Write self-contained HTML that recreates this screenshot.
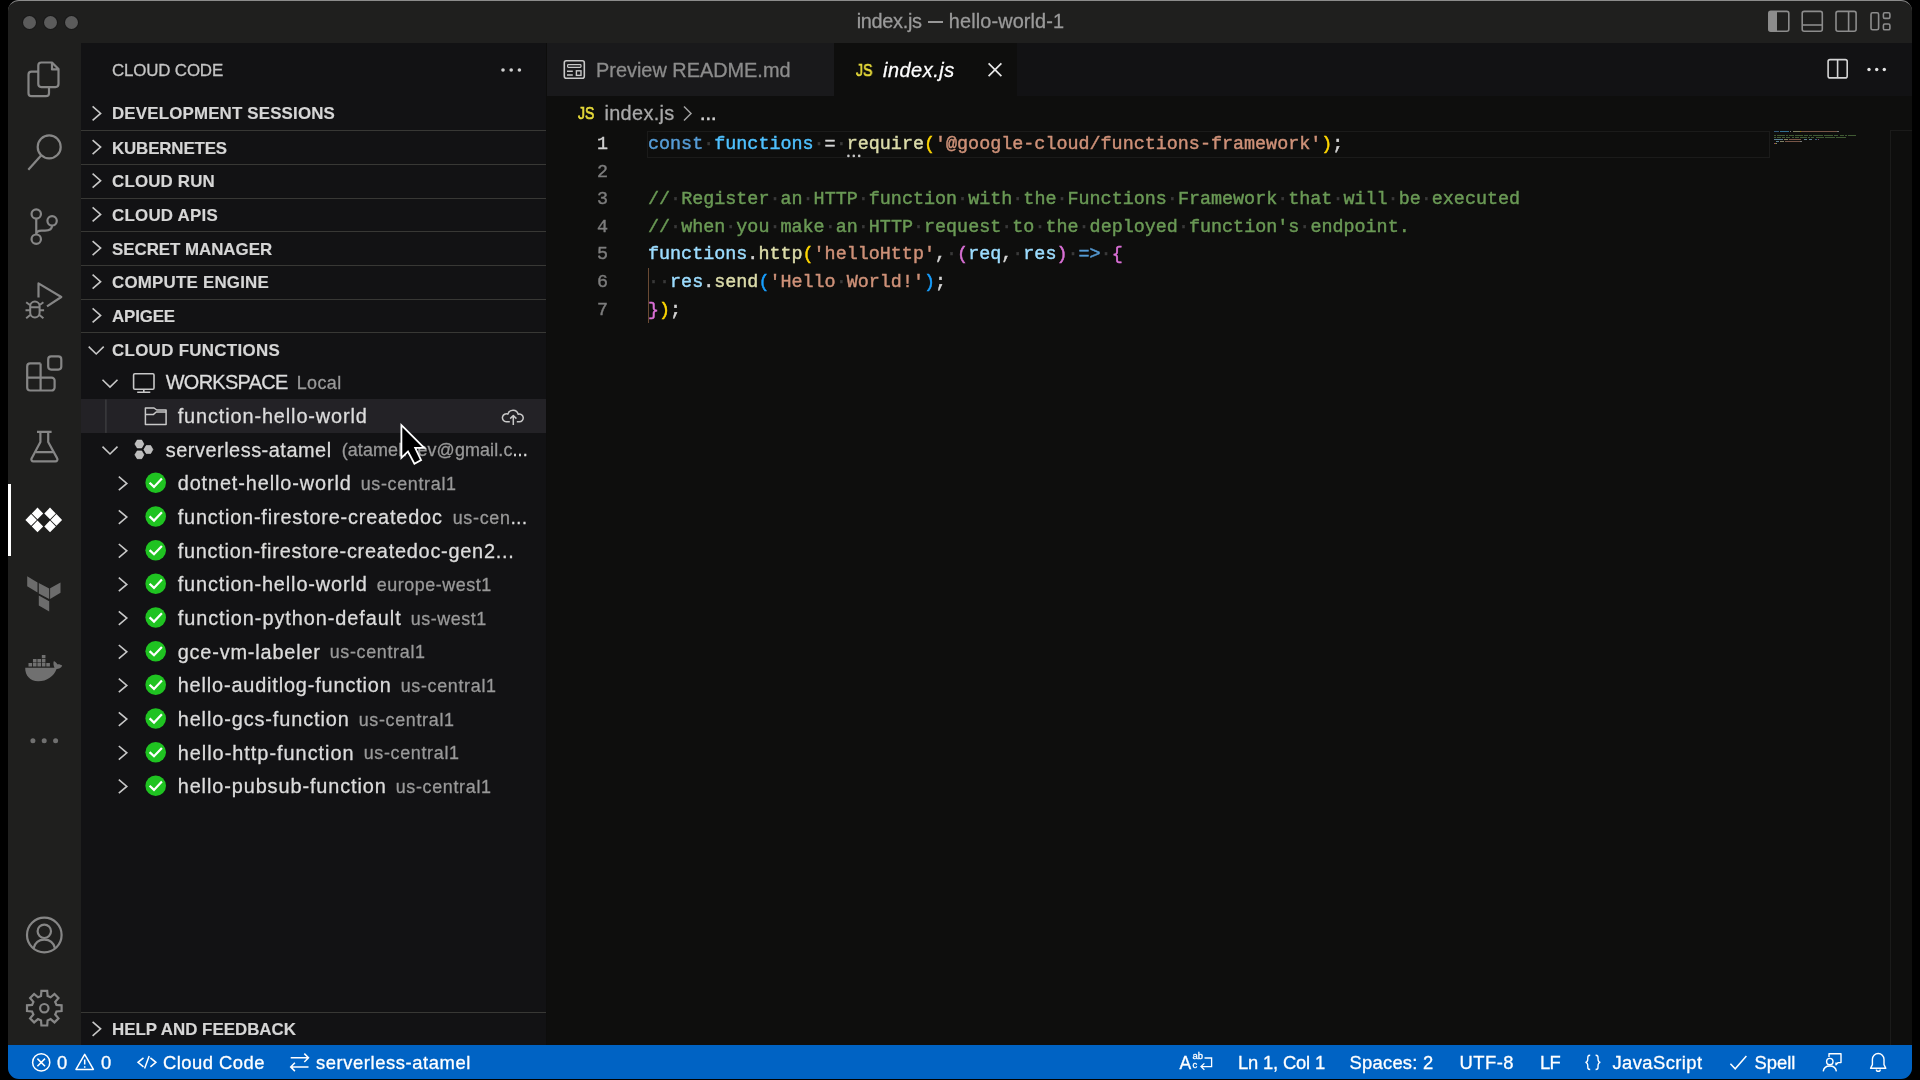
<!DOCTYPE html>
<html>
<head>
<meta charset="utf-8">
<title>index.js — hello-world-1</title>
<style>
*{box-sizing:border-box;margin:0;padding:0}
html,body{width:1920px;height:1080px;overflow:hidden;background:#000;font-family:"Liberation Sans",sans-serif;-webkit-text-stroke:0.3px currentColor;}
.abs{position:absolute}
#win{position:absolute;left:8px;top:1px;width:1904px;height:1078px;border-radius:11px;overflow:hidden;background:#0e0e0d;}
#winborder{position:absolute;left:8px;top:0;width:1904px;height:14px;border-top:1px solid #8c8c8c;border-radius:11px 11px 0 0;pointer-events:none}
/* coordinates inside #win are page coords minus (8,1); use wrapper to shift */
#page{position:absolute;left:-8px;top:-1px;width:1920px;height:1080px;will-change:transform}
#titlebar{left:8px;top:0;width:1904px;height:43px;background:#1f1f1e}
.tt{top:0;height:43px;line-height:43px;color:#9a9a9a;font-size:19.9px;white-space:nowrap}
.tl{position:absolute;top:15.5px;width:13px;height:13px;border-radius:50%;background:#5b5b5b;box-shadow:0 0 0 1px #191919}
#activity{left:8px;top:43px;width:73px;height:1002px;background:#1f1f1e}
#sidebar{left:81px;top:43px;width:465px;border-right:0;height:1002px;background:#121214}
#tabbar{left:547px;top:43px;width:1365px;height:53.2px;background:#121214}
#tab1{left:547px;top:43px;width:286.8px;height:53.2px;background:#19191b}
#tab2{left:833.8px;top:43px;width:183.5px;height:53.2px;background:#0e0e0d}
#status{left:8px;top:1045.2px;width:1904px;height:35px;background:#0063c4}
.st{position:absolute;top:1045.7px;height:34px;line-height:34px;color:#fff;font-size:18.4px;white-space:nowrap}
/* sidebar rows */
.row{position:absolute;left:81px;width:465px;height:33.667px;top:calc(96.6px + 33.667px * var(--i));line-height:33.667px;white-space:nowrap;color:#dcdcdc;font-size:19.9px}
.ph{-webkit-text-stroke:0.15px currentColor;font-weight:bold;font-size:16.9px;color:#d6d6d6;border-top:1px solid #383835}
.ph.first{border-top:none}
.row span{position:absolute;top:0.4px}
.row .d{color:#999999;font-size:17.9px;top:1px}
.row svg{position:absolute}
.code{-webkit-text-stroke:0.45px currentColor;position:absolute;left:648px;height:27.6px;line-height:27.6px;font-family:"Liberation Mono",monospace;font-size:18.4px;white-space:pre;color:#d4d4d4;top:calc(131px + 27.6px * var(--n))}
.ln{-webkit-text-stroke:0.4px currentColor;position:absolute;left:560px;width:48px;text-align:right;height:27.6px;line-height:27.6px;font-family:"Liberation Mono",monospace;font-size:18.4px;color:#7d7d7d;top:calc(131px + 27.6px * var(--n))}
.js{-webkit-text-stroke:0.65px currentColor;font-weight:normal;font-size:16.3px;line-height:18px;color:#e6da3a;transform:scaleX(0.86);transform-origin:0 0;letter-spacing:0}
.k{color:#569cd6}.c{color:#4fc1ff}.v{color:#9cdcfe}.f{color:#dcdcaa}.s{color:#ce9178}.m{color:#6a9955}.b1{color:#ffd700}.b2{color:#da70d6}.b3{color:#179fff}.w{color:#3a3a3a}
</style>
</head>
<body>
<div id="win"><div id="page">

<!-- title bar -->
<div id="titlebar" class="abs"></div>
<div class="tl" style="left:22.5px"></div><div class="tl" style="left:43.5px"></div><div class="tl" style="left:65px"></div>
<div class="abs tt" style="left:856.7px;letter-spacing:-0.3px">index.js</div>
<div class="abs" style="left:928px;top:21.2px;width:15px;height:1.7px;background:#979797"></div>
<div class="abs tt" style="left:948.8px;letter-spacing:0.12px">hello-world-1</div>

<!-- activity bar -->
<div id="activity" class="abs"></div>
<div class="abs" style="left:8px;top:484px;width:3px;height:72px;background:#fff"></div>

<!-- activity icons -->
<svg class="abs" style="left:0;top:0" width="82" height="1045" viewBox="0 0 82 1045" fill="none" stroke="#868686" stroke-width="2.2" stroke-linecap="butt" stroke-linejoin="round">
<!-- files -->
<path d="M41.3 62.5H52L58.5 69V84.1a3 3 0 0 1-3 3H41.3a3 3 0 0 1-3-3V65.5a3 3 0 0 1 3-3ZM52 62.5V69.4H58.5"/>
<path d="M38.3 71.6H31.5a3 3 0 0 0-3 3V93.2a3 3 0 0 0 3 3H46a3 3 0 0 0 3-3V87.1"/>
<!-- search -->
<circle cx="49.2" cy="146.9" r="11.5"/><path d="M41.3 155.2L28.3 169.8"/>
<!-- scm -->
<circle cx="36.25" cy="214" r="4.7"/><circle cx="52.1" cy="220.8" r="4.7"/><circle cx="36.25" cy="239.2" r="4.7"/>
<path d="M36.25 218.7V234.5M52.1 225.5C52.1 229.5 49 230.6 45 230.6H41.5C38.5 230.6 36.25 232 36.25 234.5"/>
<!-- debug -->
<path d="M38.5 297.5V283.4L61.3 297L47 306.3" stroke-linejoin="round"/>
<path d="M30.2 306.2a4.7 4.7 0 0 1 9.4 0V312.8a4.7 4.7 0 0 1-9.4 0ZM30.2 307.2H39.6M30.2 305.2L26.2 302.2M30.2 310.2H25.5M30.2 315L26.2 318.3M39.4 305.2L43.4 302.2M39.4 310.2H44.1M39.4 315L43.4 318.3" stroke-width="2"/>
<!-- extensions -->
<path d="M40.6 363.4H30.2a3 3 0 0 0-3 3V387.5a3 3 0 0 0 3 3H51.6a3 3 0 0 0 3-3V380.6a3 3 0 0 0-3-3H27.2M40.6 363.4V390.5"/>
<rect x="48.2" y="356.4" width="13.1" height="13.2" rx="3"/>
<!-- beaker -->
<path d="M37 431.8H51.6M40.4 431.8V442L31.6 458.4a2 2 0 0 0 1.8 3H55.4a2 2 0 0 0 1.8-3L48.2 442V431.8M36 452.1H52.8"/>
<!-- cloud code (active) -->
<path d="M37.5 507.6L43.2 513.4L37.5 519.3L31.8 513.4ZM50.0 507.6L55.8 513.4L50.0 519.3L44.3 513.4ZM37.5 520.5L43.2 526.4L37.5 532.2L31.8 526.4ZM50.0 520.5L55.8 526.4L50.0 532.2L44.3 526.4ZM31.1 514.0L36.9 519.9L31.1 525.8L25.4 519.9ZM56.4 514.0L62.1 519.9L56.4 525.8L50.6 519.9Z" fill="#ffffff" stroke="none"/>
<!-- terraform -->
<path d="M27.2 576.2L37.5 582.4V592.5L27.2 586.3ZM38.8 583L49.2 588.6V599L38.8 593.4ZM50.1 588.2L60.5 582.4V592.8L50.1 599ZM38.8 595.6L49.2 601.2V611.5L38.8 605.5Z" fill="#6c6c6c" stroke="none"/>
<!-- docker -->
<path d="M25.2 667.8H54.5C53.5 665.5 53 663 53.9 661.1C55.5 662 56.8 663 57.2 664.3C59 664 61 664.6 62.2 665.7C61 667.8 58.8 668.9 56.6 668.9C54 676 47 681.2 38.2 681.2C30 681.2 25 675.5 25.2 667.8ZM28.5 663.1h3.6v3.4h-3.6zM32.95 663.1h3.6v3.4h-3.6zM37.4 663.1h3.6v3.4h-3.6zM41.85 663.1h3.6v3.4h-3.6zM46.3 663.1h3.6v3.4h-3.6zM32.95 659.1h3.6v3.3h-3.6zM37.4 659.1h3.6v3.3h-3.6zM41.85 659.1h3.6v3.3h-3.6zM41.85 655h3.6v3.3h-3.6z" fill="#707070" stroke="none"/>
<!-- more -->
<circle cx="32.9" cy="740.7" r="2.5" fill="#707070" stroke="none"/><circle cx="44.2" cy="740.7" r="2.5" fill="#707070" stroke="none"/><circle cx="55.6" cy="740.7" r="2.5" fill="#707070" stroke="none"/>
<!-- account -->
<circle cx="44.3" cy="935" r="17.3"/><circle cx="44.3" cy="931.3" r="6.7"/><path d="M33.6 948.3C35 942.5 39 939.6 44.3 939.6C49.6 939.6 53.6 942.5 55 948.3"/>
<!-- gear -->
<path d="M41.0 996.0 L41.4 990.9 L47.2 990.9 L47.6 996.0 L50.6 997.3 L54.5 994.0 L58.5 998.0 L55.2 1001.9 L56.5 1004.9 L61.6 1005.3 L61.6 1011.1 L56.5 1011.5 L55.2 1014.5 L58.5 1018.4 L54.5 1022.4 L50.6 1019.1 L47.6 1020.4 L47.2 1025.5 L41.4 1025.5 L41.0 1020.4 L38.0 1019.1 L34.1 1022.4 L30.1 1018.4 L33.4 1014.5 L32.1 1011.5 L27.0 1011.1 L27.0 1005.3 L32.1 1004.9 L33.4 1001.9 L30.1 998.0 L34.1 994.0 L38.0 997.3Z" stroke-linejoin="miter"/><circle cx="44.3" cy="1008.2" r="4.2"/>
</svg>
<div id="status" class="abs"></div>
<!-- sidebar -->
<div id="sidebar" class="abs"></div>
<div class="abs" style="left:112px;top:43.7px;height:53.6px;line-height:53.6px;font-size:16.9px;color:#c4c4c4;white-space:nowrap;letter-spacing:-0.16px" id="sbtitle">CLOUD CODE</div>

<div class="row ph first" style="--i:0"><span style="left:31px;letter-spacing:0.17px">DEVELOPMENT SESSIONS</span></div>
<div class="row ph" style="--i:1"><span style="left:31px;letter-spacing:-0.14px">KUBERNETES</span></div>
<div class="row ph" style="--i:2"><span style="left:31px;letter-spacing:0.18px">CLOUD RUN</span></div>
<div class="row ph" style="--i:3"><span style="left:31px;letter-spacing:0.25px">CLOUD APIS</span></div>
<div class="row ph" style="--i:4"><span style="left:31px;letter-spacing:-0.03px">SECRET MANAGER</span></div>
<div class="row ph" style="--i:5"><span style="left:31px;letter-spacing:0.22px">COMPUTE ENGINE</span></div>
<div class="row ph" style="--i:6"><span style="left:31px;letter-spacing:-0.14px">APIGEE</span></div>
<div class="row ph" style="--i:7"><span style="left:31px;letter-spacing:0.32px">CLOUD FUNCTIONS</span></div>

<div class="row" style="--i:8"><span style="left:84.7px;letter-spacing:-0.65px">WORKSPACE</span><span class="d" style="left:215.7px;letter-spacing:0.44px">Local</span></div>
<div class="row" style="--i:9;background:#232226;top:399.1px;height:33.8px;line-height:35.8px"><span style="left:96.7px;letter-spacing:0.88px">function-hello-world</span></div>
<div class="row" style="--i:10"><span style="left:84.7px;letter-spacing:0.53px">serverless-atamel</span><span class="d" style="left:260.7px;letter-spacing:0.13px">(atamel.dev@gmail.c<span style="position:static;color:#dcdcdc">...</span></span></div>
<div class="row" style="--i:11"><span style="left:96.7px;letter-spacing:0.88px">dotnet-hello-world</span><span class="d" style="left:279.7px;letter-spacing:0.68px">us-central1</span></div>
<div class="row" style="--i:12"><span style="left:96.7px;letter-spacing:0.82px">function-firestore-createdoc</span><span class="d" style="left:371.7px;letter-spacing:0.71px">us-cen<span style="position:static;color:#dcdcdc">...</span></span></div>
<div class="row" style="--i:13"><span style="left:96.7px;letter-spacing:0.76px">function-firestore-createdoc-gen2...</span></div>
<div class="row" style="--i:14"><span style="left:96.7px;letter-spacing:0.88px">function-hello-world</span><span class="d" style="left:295.7px;letter-spacing:0.55px">europe-west1</span></div>
<div class="row" style="--i:15"><span style="left:96.7px;letter-spacing:0.94px">function-python-default</span><span class="d" style="left:329.7px;letter-spacing:0.55px">us-west1</span></div>
<div class="row" style="--i:16"><span style="left:96.7px;letter-spacing:0.82px">gce-vm-labeler</span><span class="d" style="left:248.7px;letter-spacing:0.68px">us-central1</span></div>
<div class="row" style="--i:17"><span style="left:96.7px;letter-spacing:0.84px">hello-auditlog-function</span><span class="d" style="left:319.7px;letter-spacing:0.68px">us-central1</span></div>
<div class="row" style="--i:18"><span style="left:96.7px;letter-spacing:0.89px">hello-gcs-function</span><span class="d" style="left:277.7px;letter-spacing:0.68px">us-central1</span></div>
<div class="row" style="--i:19"><span style="left:96.7px;letter-spacing:0.99px">hello-http-function</span><span class="d" style="left:282.7px;letter-spacing:0.68px">us-central1</span></div>
<div class="row" style="--i:20"><span style="left:96.7px;letter-spacing:0.9px">hello-pubsub-function</span><span class="d" style="left:314.7px;letter-spacing:0.68px">us-central1</span></div>

<div class="row ph" style="top:1012px;height:33px"><span style="left:31px">HELP AND FEEDBACK</span></div>

<!-- editor tabs -->
<div class="abs" style="left:546px;top:43px;width:1px;height:1002.2px;background:#0d0d0c"></div>
<div id="tabbar" class="abs"></div>
<div id="tab1" class="abs"></div>
<div id="tab2" class="abs"></div>
<div class="abs" style="left:596px;top:43px;height:53.2px;line-height:54px;font-size:19.9px;color:#8c8c8c;white-space:nowrap">Preview README.md</div>
<div class="abs" style="left:883px;top:43px;height:53.2px;line-height:54px;font-size:19.9px;color:#fff;font-style:italic;white-space:nowrap;letter-spacing:0.52px">index.js</div>

<!-- breadcrumbs -->
<div class="abs" style="left:604.5px;top:96.5px;height:33.7px;line-height:33.7px;font-size:19.9px;color:#a9a9a9;white-space:nowrap;letter-spacing:0.32px">index.js</div>
<div class="abs" style="left:700px;top:96.5px;height:33.7px;line-height:33.7px;font-size:19.9px;color:#cfcfcf;white-space:nowrap;-webkit-text-stroke:0.6px currentColor">...</div>

<!-- code -->
<div class="abs" style="left:647px;top:131px;width:1123px;height:27px;border:1.5px solid #1b1b1a"></div>
<div class="ln" style="--n:0;color:#d0d0d0">1</div>
<div class="ln" style="--n:1">2</div>
<div class="ln" style="--n:2">3</div>
<div class="ln" style="--n:3">4</div>
<div class="ln" style="--n:4">5</div>
<div class="ln" style="--n:5">6</div>
<div class="ln" style="--n:6">7</div>
<div class="code" style="--n:0"><span class="k">const</span><span class="w">·</span><span class="c">functions</span><span class="w">·</span>=<span class="w">·</span><span class="f">require</span><span class="b1">(</span><span class="s">'@google-cloud/functions-framework'</span><span class="b1">)</span>;</div>
<div class="code m" style="--n:2">//<span class="w">·</span>Register<span class="w">·</span>an<span class="w">·</span>HTTP<span class="w">·</span>function<span class="w">·</span>with<span class="w">·</span>the<span class="w">·</span>Functions<span class="w">·</span>Framework<span class="w">·</span>that<span class="w">·</span>will<span class="w">·</span>be<span class="w">·</span>executed</div>
<div class="code m" style="--n:3">//<span class="w">·</span>when<span class="w">·</span>you<span class="w">·</span>make<span class="w">·</span>an<span class="w">·</span>HTTP<span class="w">·</span>request<span class="w">·</span>to<span class="w">·</span>the<span class="w">·</span>deployed<span class="w">·</span>function's<span class="w">·</span>endpoint.</div>
<div class="code" style="--n:4"><span class="v">functions</span>.<span class="f">http</span><span class="b1">(</span><span class="s">'helloHttp'</span>,<span class="w">·</span><span class="b2">(</span><span class="v">req</span>,<span class="w">·</span><span class="v">res</span><span class="b2">)</span><span class="w">·</span><span class="k">=&gt;</span><span class="w">·</span><span class="b2">{</span></div>
<div class="code" style="--n:5"><span class="w">··</span><span class="v">res</span>.<span class="f">send</span><span class="b3">(</span><span class="s">'Hello<span class="w">·</span>World!'</span><span class="b3">)</span>;</div>
<div class="code" style="--n:6"><span class="b2">}</span><span class="b1">)</span>;</div>
<div class="abs" style="left:647.5px;top:268px;width:1.3px;height:55px;background:#6a4a33"></div>

<!-- JS icons -->
<div class="abs js" style="left:856.2px;top:60.9px">JS</div>
<div class="abs js" style="left:577.6px;top:104px">JS</div>
<!-- status translate icon text -->
<div class="abs" style="left:1179.5px;top:1052.6px;font-size:17.5px;line-height:20px;color:#fff">A</div>
<div class="abs" style="left:1192.6px;top:1050.6px;font-size:9.5px;line-height:10px;color:#fff;letter-spacing:-0.2px">ab</div>
<div class="abs" style="left:1192.6px;top:1060.4px;font-size:9.5px;line-height:10px;color:#fff">c</div>
<!-- minimap --><div class="abs" style="left:0;top:0;opacity:0.55">
<div class="abs" style="left:1773.7px;top:130.6px;width:5.2px;height:1.1px;background:#569cd6"></div>
<div class="abs" style="left:1780.0px;top:130.6px;width:9.4px;height:1.1px;background:#4fc1ff"></div>
<div class="abs" style="left:1790.4px;top:130.6px;width:1.0px;height:1.1px;background:#d4d4d4"></div>
<div class="abs" style="left:1792.5px;top:130.6px;width:7.3px;height:1.1px;background:#dcdcaa"></div>
<div class="abs" style="left:1799.8px;top:130.6px;width:1.0px;height:1.1px;background:#ffd700"></div>
<div class="abs" style="left:1800.9px;top:130.6px;width:36.6px;height:1.1px;background:#ce9178"></div>
<div class="abs" style="left:1837.4px;top:130.6px;width:2.1px;height:1.1px;background:#d4d4d4"></div>
<div class="abs" style="left:1773.7px;top:134.9px;width:2.1px;height:1.1px;background:#6a9955"></div>
<div class="abs" style="left:1776.8px;top:134.9px;width:8.4px;height:1.1px;background:#6a9955"></div>
<div class="abs" style="left:1786.2px;top:134.9px;width:2.1px;height:1.1px;background:#6a9955"></div>
<div class="abs" style="left:1789.4px;top:134.9px;width:4.2px;height:1.1px;background:#6a9955"></div>
<div class="abs" style="left:1794.6px;top:134.9px;width:8.4px;height:1.1px;background:#6a9955"></div>
<div class="abs" style="left:1804.0px;top:134.9px;width:4.2px;height:1.1px;background:#6a9955"></div>
<div class="abs" style="left:1809.2px;top:134.9px;width:3.1px;height:1.1px;background:#6a9955"></div>
<div class="abs" style="left:1813.4px;top:134.9px;width:9.4px;height:1.1px;background:#6a9955"></div>
<div class="abs" style="left:1823.9px;top:134.9px;width:9.4px;height:1.1px;background:#6a9955"></div>
<div class="abs" style="left:1834.3px;top:134.9px;width:4.2px;height:1.1px;background:#6a9955"></div>
<div class="abs" style="left:1839.5px;top:134.9px;width:4.2px;height:1.1px;background:#6a9955"></div>
<div class="abs" style="left:1844.8px;top:134.9px;width:2.1px;height:1.1px;background:#6a9955"></div>
<div class="abs" style="left:1847.9px;top:134.9px;width:8.4px;height:1.1px;background:#6a9955"></div>
<div class="abs" style="left:1773.7px;top:137px;width:2.1px;height:1.1px;background:#6a9955"></div>
<div class="abs" style="left:1776.8px;top:137px;width:4.2px;height:1.1px;background:#6a9955"></div>
<div class="abs" style="left:1782.1px;top:137px;width:3.1px;height:1.1px;background:#6a9955"></div>
<div class="abs" style="left:1786.2px;top:137px;width:4.2px;height:1.1px;background:#6a9955"></div>
<div class="abs" style="left:1791.5px;top:137px;width:2.1px;height:1.1px;background:#6a9955"></div>
<div class="abs" style="left:1794.6px;top:137px;width:4.2px;height:1.1px;background:#6a9955"></div>
<div class="abs" style="left:1799.8px;top:137px;width:7.3px;height:1.1px;background:#6a9955"></div>
<div class="abs" style="left:1808.2px;top:137px;width:2.1px;height:1.1px;background:#6a9955"></div>
<div class="abs" style="left:1811.3px;top:137px;width:3.1px;height:1.1px;background:#6a9955"></div>
<div class="abs" style="left:1815.5px;top:137px;width:8.4px;height:1.1px;background:#6a9955"></div>
<div class="abs" style="left:1824.9px;top:137px;width:10.4px;height:1.1px;background:#6a9955"></div>
<div class="abs" style="left:1836.4px;top:137px;width:9.4px;height:1.1px;background:#6a9955"></div>
<div class="abs" style="left:1773.7px;top:139.2px;width:9.4px;height:1.1px;background:#9cdcfe"></div>
<div class="abs" style="left:1784.2px;top:139.2px;width:4.2px;height:1.1px;background:#dcdcaa"></div>
<div class="abs" style="left:1789.4px;top:139.2px;width:11.5px;height:1.1px;background:#ce9178"></div>
<div class="abs" style="left:1804.0px;top:139.2px;width:3.1px;height:1.1px;background:#9cdcfe"></div>
<div class="abs" style="left:1809.2px;top:139.2px;width:3.1px;height:1.1px;background:#9cdcfe"></div>
<div class="abs" style="left:1814.5px;top:139.2px;width:2.1px;height:1.1px;background:#569cd6"></div>
<div class="abs" style="left:1817.6px;top:139.2px;width:1.0px;height:1.1px;background:#da70d6"></div>
<div class="abs" style="left:1775.8px;top:141.3px;width:3.1px;height:1.1px;background:#9cdcfe"></div>
<div class="abs" style="left:1780.0px;top:141.3px;width:4.2px;height:1.1px;background:#dcdcaa"></div>
<div class="abs" style="left:1785.2px;top:141.3px;width:14.6px;height:1.1px;background:#ce9178"></div>
<div class="abs" style="left:1799.8px;top:141.3px;width:2.1px;height:1.1px;background:#d4d4d4"></div>
<div class="abs" style="left:1773.7px;top:143.4px;width:1.0px;height:1.1px;background:#da70d6"></div>
<div class="abs" style="left:1774.7px;top:143.4px;width:1.0px;height:1.1px;background:#ffd700"></div>
<div class="abs" style="left:1775.8px;top:143.4px;width:1.0px;height:1.1px;background:#d4d4d4"></div>
</div><!-- scrollbar ruler border -->
<div class="abs" style="left:1890px;top:130px;width:1px;height:915px;background:#1b1b1a"></div>
<div class="abs" style="left:1890px;top:130px;width:22px;height:1px;background:#1b1b1a"></div>
<!-- status bar -->
<div class="st" style="left:57px">0</div>
<div class="st" style="left:101px">0</div>
<div class="st" style="left:163px;letter-spacing:0.49px">Cloud Code</div>
<div class="st" style="left:316px;letter-spacing:0.58px">serverless-atamel</div>
<div class="st" style="left:1238px;letter-spacing:-0.18px">Ln 1, Col 1</div>
<div class="st" style="left:1349.5px;letter-spacing:0.24px">Spaces: 2</div>
<div class="st" style="left:1459.5px;letter-spacing:0.48px">UTF-8</div>
<div class="st" style="left:1540px;letter-spacing:-0.73px">LF</div>
<div class="st" style="left:1612.5px;letter-spacing:0.41px">JavaScript</div>
<div class="st" style="left:1754.5px">Spell</div>

<!-- overlay icons -->
<svg class="abs" style="left:0;top:0" width="1920" height="1080" viewBox="0 0 1920 1080" fill="none" stroke-linecap="butt">
<path d="M92.6 106.4L100.6 113.4L92.6 120.4" stroke="#c8c8c8" stroke-width="1.6"/>
<path d="M92.6 140.1L100.6 147.1L92.6 154.1" stroke="#c8c8c8" stroke-width="1.6"/>
<path d="M92.6 173.7L100.6 180.7L92.6 187.7" stroke="#c8c8c8" stroke-width="1.6"/>
<path d="M92.6 207.4L100.6 214.4L92.6 221.4" stroke="#c8c8c8" stroke-width="1.6"/>
<path d="M92.6 241.1L100.6 248.1L92.6 255.1" stroke="#c8c8c8" stroke-width="1.6"/>
<path d="M92.6 274.7L100.6 281.7L92.6 288.7" stroke="#c8c8c8" stroke-width="1.6"/>
<path d="M92.6 308.4L100.6 315.4L92.6 322.4" stroke="#c8c8c8" stroke-width="1.6"/>
<path d="M92.6 1021.8L100.6 1028.8L92.6 1035.8" stroke="#c8c8c8" stroke-width="1.6"/>
<path d="M88.7 346.6L96.2 354L103.7 346.6" stroke="#c8c8c8" stroke-width="1.6"/>
<path d="M102.5 379.7L110.0 387.1L117.5 379.7" stroke="#c8c8c8" stroke-width="1.6"/>
<path d="M102.5 446.6L110.0 454.0L117.5 446.6" stroke="#c8c8c8" stroke-width="1.6"/>
<path d="M118.8 476.6L126.8 483.4L118.8 490.2" stroke="#c8c8c8" stroke-width="1.6"/>
<path d="M118.8 510.3L126.8 517.1L118.8 523.9" stroke="#c8c8c8" stroke-width="1.6"/>
<path d="M118.8 544.0L126.8 550.8L118.8 557.6" stroke="#c8c8c8" stroke-width="1.6"/>
<path d="M118.8 577.6L126.8 584.4L118.8 591.2" stroke="#c8c8c8" stroke-width="1.6"/>
<path d="M118.8 611.3L126.8 618.1L118.8 624.9" stroke="#c8c8c8" stroke-width="1.6"/>
<path d="M118.8 645.0L126.8 651.8L118.8 658.6" stroke="#c8c8c8" stroke-width="1.6"/>
<path d="M118.8 678.6L126.8 685.4L118.8 692.2" stroke="#c8c8c8" stroke-width="1.6"/>
<path d="M118.8 712.3L126.8 719.1L118.8 725.9" stroke="#c8c8c8" stroke-width="1.6"/>
<path d="M118.8 746.0L126.8 752.8L118.8 759.6" stroke="#c8c8c8" stroke-width="1.6"/>
<path d="M118.8 779.6L126.8 786.4L118.8 793.2" stroke="#c8c8c8" stroke-width="1.6"/>
<rect x="133.6" y="373.8" width="20.4" height="15.5" rx="1.3" stroke="#c8c8c8" stroke-width="1.6"/><path d="M143.8 389.5V392M137.2 392.2H150.3" stroke="#c8c8c8" stroke-width="1.6"/>
<path d="M145.4 408H154L156.8 410H166.1V424.5H145.4ZM145.4 414.6H153.2L156.2 412H166.1" stroke="#c8c8c8" stroke-width="1.5" stroke-linejoin="round"/>
<rect x="105.2" y="399.5" width="1.4" height="33.4" fill="#3d3d3f"/>
<path d="M143.9 444.0L141.7 447.9L137.2 447.9L134.9 444.0L137.2 440.1L141.7 440.1ZM152.9 449.5L150.7 453.4L146.2 453.4L143.9 449.5L146.2 445.6L150.7 445.6ZM143.9 454.8L141.7 458.7L137.2 458.7L134.9 454.8L137.2 450.9L141.7 450.9Z" fill="#bdbdbd" stroke="#d5d5d5" stroke-width="0.6"/>
<circle cx="155.7" cy="482.8" r="10.3" fill="#1fc321"/><path d="M149.6 482.7L154 486.9L161.9 478.6" stroke="#fff" stroke-width="2.2" stroke-linejoin="miter"/>
<circle cx="155.7" cy="516.5" r="10.3" fill="#1fc321"/><path d="M149.6 516.4L154 520.6L161.9 512.3" stroke="#fff" stroke-width="2.2" stroke-linejoin="miter"/>
<circle cx="155.7" cy="550.2" r="10.3" fill="#1fc321"/><path d="M149.6 550.1L154 554.3L161.9 546.0" stroke="#fff" stroke-width="2.2" stroke-linejoin="miter"/>
<circle cx="155.7" cy="583.8" r="10.3" fill="#1fc321"/><path d="M149.6 583.7L154 587.9L161.9 579.6" stroke="#fff" stroke-width="2.2" stroke-linejoin="miter"/>
<circle cx="155.7" cy="617.5" r="10.3" fill="#1fc321"/><path d="M149.6 617.4L154 621.6L161.9 613.3" stroke="#fff" stroke-width="2.2" stroke-linejoin="miter"/>
<circle cx="155.7" cy="651.2" r="10.3" fill="#1fc321"/><path d="M149.6 651.1L154 655.3L161.9 647.0" stroke="#fff" stroke-width="2.2" stroke-linejoin="miter"/>
<circle cx="155.7" cy="684.8" r="10.3" fill="#1fc321"/><path d="M149.6 684.7L154 688.9L161.9 680.6" stroke="#fff" stroke-width="2.2" stroke-linejoin="miter"/>
<circle cx="155.7" cy="718.5" r="10.3" fill="#1fc321"/><path d="M149.6 718.4L154 722.6L161.9 714.3" stroke="#fff" stroke-width="2.2" stroke-linejoin="miter"/>
<circle cx="155.7" cy="752.2" r="10.3" fill="#1fc321"/><path d="M149.6 752.1L154 756.3L161.9 748.0" stroke="#fff" stroke-width="2.2" stroke-linejoin="miter"/>
<circle cx="155.7" cy="785.8" r="10.3" fill="#1fc321"/><path d="M149.6 785.7L154 789.9L161.9 781.6" stroke="#fff" stroke-width="2.2" stroke-linejoin="miter"/>
<path d="M509.8 421.7H506.3A3.95 3.95 0 1 1 507.9 414.1A5.3 5.3 0 0 1 518.2 414.3A3.8 3.8 0 1 1 519.3 421.7H516.8M513.3 425V415.6M510.2 418.6L513.3 415.5L516.4 418.6" stroke="#c8c8c8" stroke-width="1.5" stroke-linejoin="round"/>
<circle cx="503" cy="70" r="1.8" fill="#d0d0d0"/>
<circle cx="511.2" cy="70" r="1.8" fill="#d0d0d0"/>
<circle cx="519.4" cy="70" r="1.8" fill="#d0d0d0"/>
<rect x="564.3" y="60.8" width="20" height="17.4" rx="2" stroke="#c8c8c8" stroke-width="1.6"/><rect x="567.6" y="64.6" width="13.4" height="2.8" rx="0.8" stroke="#c8c8c8" stroke-width="1.2"/><path d="M567 71.2H572.8M567 74.9H572.8" stroke="#c8c8c8" stroke-width="1.5"/><rect x="576.4" y="70.8" width="4.6" height="4.6" stroke="#c8c8c8" stroke-width="1.4"/>
<path d="M988.6 63.4L1001.4 76.2M1001.4 63.4L988.6 76.2" stroke="#e8e8e8" stroke-width="1.7"/>
<path d="M684 106.5L691 113.5L684 120.5" stroke="#a0a0a0" stroke-width="1.5"/>
<rect x="1768.8" y="11.4" width="20" height="19.8" rx="2" stroke="#8c8c8c" stroke-width="1.6"/><path d="M1768.8 13.4a2 2 0 0 1 2-2H1777V31.2H1770.8a2 2 0 0 1-2-2Z" fill="#8c8c8c"/>
<rect x="1802.2" y="11.4" width="20.1" height="19.8" rx="2" stroke="#8c8c8c" stroke-width="1.6"/><path d="M1802.2 25H1822.3" stroke="#8c8c8c" stroke-width="1.6"/>
<rect x="1836" y="11.4" width="20.1" height="19.8" rx="2" stroke="#8c8c8c" stroke-width="1.6"/><path d="M1848.6 11.4V31.2" stroke="#8c8c8c" stroke-width="1.6"/>
<rect x="1871" y="12.8" width="7.6" height="17" rx="1.6" stroke="#8c8c8c" stroke-width="1.6"/><rect x="1883.4" y="12.8" width="6.5" height="5.6" rx="1.4" stroke="#8c8c8c" stroke-width="1.6"/><rect x="1883.4" y="24" width="6.5" height="5.8" rx="1.4" stroke="#8c8c8c" stroke-width="1.6"/>
<rect x="1828.1" y="59.6" width="19.1" height="18.3" rx="2" stroke="#d4d4d4" stroke-width="1.6"/><path d="M1837.6 59.6V77.9" stroke="#d4d4d4" stroke-width="1.6"/>
<circle cx="1869" cy="69.5" r="1.7" fill="#e4e4e4"/>
<circle cx="1876.7" cy="69.5" r="1.7" fill="#e4e4e4"/>
<circle cx="1884.3" cy="69.5" r="1.7" fill="#e4e4e4"/>
<circle cx="848.4" cy="155.9" r="1.3" fill="#c8c8c8"/>
<circle cx="853.8" cy="155.9" r="1.3" fill="#c8c8c8"/>
<circle cx="859.2" cy="155.9" r="1.3" fill="#c8c8c8"/>
<circle cx="41.2" cy="1062.4" r="8.6" stroke="#ffffff" stroke-width="1.5"/><path d="M37.4 1058.6L45 1066.2M45 1058.6L37.4 1066.2" stroke="#ffffff" stroke-width="1.5"/>
<path d="M84.7 1054.4L93.4 1069.4H76Z" stroke="#ffffff" stroke-width="1.5" stroke-linejoin="round"/><path d="M84.7 1059.6V1064.6M84.7 1066.2V1067.8" stroke="#ffffff" stroke-width="1.5"/>
<path d="M143.5 1057.8L138 1062.3L143.5 1066.9M149.2 1056L144.6 1068.6M150.4 1057.8L155.9 1062.3L150.4 1066.9" stroke="#ffffff" stroke-width="1.5"/>
<path d="M290.7 1057.8H308.3M304.3 1053.6L308.5 1057.8L304.3 1062M308.5 1066.9H290.9M294.9 1062.7L290.7 1066.9L294.9 1071.1" stroke="#ffffff" stroke-width="1.5"/>
<path d="M1590.2 1055.3C1587.6 1055.3 1587.8 1056.8 1587.8 1058.5C1587.8 1060.5 1587.6 1062.2 1585.4 1062.4C1587.6 1062.6 1587.8 1064.3 1587.8 1066.3C1587.8 1068 1587.6 1069.5 1590.2 1069.5M1595.6 1055.3C1598.2 1055.3 1598 1056.8 1598 1058.5C1598 1060.5 1598.2 1062.2 1600.4 1062.4C1598.2 1062.6 1598 1064.3 1598 1066.3C1598 1068 1598.2 1069.5 1595.6 1069.5" stroke="#ffffff" stroke-width="1.4"/>
<path d="M1730.4 1063.7L1735.2 1068.8L1746.4 1056" stroke="#ffffff" stroke-width="1.5"/>
<path d="M1829 1057V1053.8H1841V1062.6H1838.2L1836 1064.8V1062.6" stroke="#ffffff" stroke-width="1.4" stroke-linejoin="round"/><circle cx="1829.8" cy="1061.6" r="3.2" stroke="#ffffff" stroke-width="1.4"/><path d="M1823.2 1071.4C1823.8 1067.5 1826.5 1066 1829.8 1066C1833.1 1066 1835.8 1067.5 1836.4 1071.4" stroke="#ffffff" stroke-width="1.4"/>
<path d="M1870.6 1068.3H1885.8L1884 1064.6V1059.3a5.8 5.8 0 0 0-11.6 0V1064.6ZM1876.4 1069.4a1.9 1.9 0 0 0 3.8 0" stroke="#ffffff" stroke-width="1.4" stroke-linejoin="round"/>
<path d="M1204.5 1058H1211.6V1066.6H1201.2M1204.4 1063.4L1201 1066.6L1204.4 1069.8" stroke="#ffffff" stroke-width="1.3"/>
<path d="M402.3 427.3L422 447H413.8L419.9 459.8L414.8 462.6L408.2 450L402.3 455.8Z" fill="#000" stroke="#fff" stroke-width="3.6" stroke-linejoin="miter" stroke-miterlimit="10" paint-order="stroke"/>
</svg>
</div></div>
<div id="winborder"></div>
</body>
</html>
